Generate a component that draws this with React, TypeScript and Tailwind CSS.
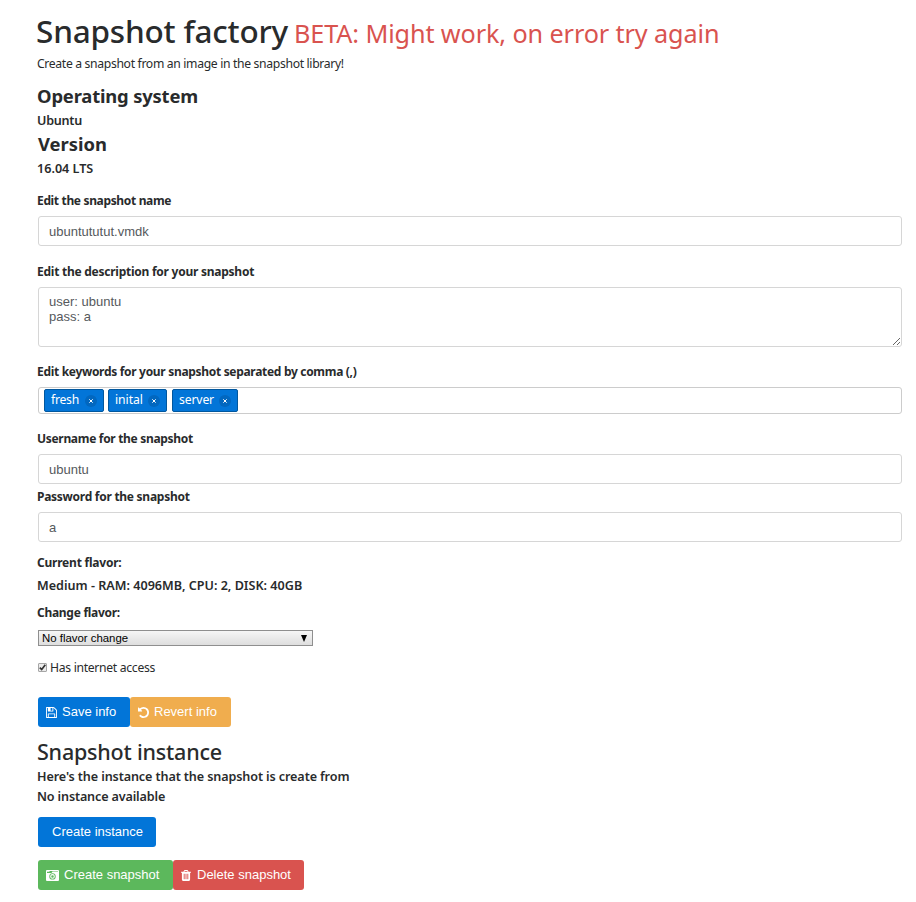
import type { ReactNode } from "react";

const FLOPPY =
  "M384 1536h768v-384h-768v384zM1280 1536h128v-896q0-14-10-38.5t-20-34.5l-281-281q-10-10-34-20t-39-10v416q0 40-28 68t-68 28h-576q-40 0-68-28t-28-68v-416h-128v1280h128v-416q0-40 28-68t68-28h832q40 0 68 28t28 68v416zM896 608v-320q0-13-9.5-22.5t-22.5-9.5h-192q-13 0-22.5 9.5t-9.5 22.5v320q0 13 9.5 22.5t22.5 9.5h192q13 0 22.5-9.5t9.5-22.5zM1536 640v928q0 40-28 68t-68 28h-1344q-40 0-68-28t-28-68v-1344q0-40 28-68t68-28h928q40 0 88 20t76 48l280 280q28 28 48 76t20 88z";
const UNDO =
  "M1664 896q0 156-61 298t-164 245-245 164-298 61q-172 0-327-72.5t-264-204.5q-7-10-6.5-22.5t8.5-20.5l137-138q10-9 25-9 16 2 23 12 73 95 179 147t225 52q104 0 198.5-40.5t163.5-109.5 109.5-163.5 40.5-198.5-40.5-198.5-109.5-163.5-163.5-109.5-198.5-40.5q-98 0-188 35.5t-160 101.5l137 138q31 30 14 69-17 40-59 40h-448q-26 0-45-19t-19-45v-448q0-42 40-59 39-17 69 14l130 129q107-101 244.5-156.5t284.5-55.5q156 0 298 61t245 164 164 245 61 298z";
const TRASH =
  "M704 1376v-704q0-14-9-23t-23-9h-64q-14 0-23 9t-9 23v704q0 14 9 23t23 9h64q14 0 23-9t9-23zm256 0v-704q0-14-9-23t-23-9h-64q-14 0-23 9t-9 23v704q0 14 9 23t23 9h64q14 0 23-9t9-23zm256 0v-704q0-14-9-23t-23-9h-64q-14 0-23 9t-9 23v704q0 14 9 23t23 9h64q14 0 23-9t9-23zm-544-992h448l-48-117q-7-9-17-11h-317q-10 2-17 11zm928 32v64q0 14-9 23t-23 9h-96v948q0 83-47 143.5t-113 60.5h-832q-66 0-113-58.5t-47-141.5v-952h-96q-14 0-23-9t-9-23v-64q0-14 9-23t23-9h309l70-167q15-37 54-63t79-26h320q40 0 79 26t54 63l70 167h309q14 0 23 9t9 23z";

const control =
  "block w-full rounded-[3px] border border-[#d6d6d6] bg-white px-[10px] font-['Liberation_Sans',sans-serif] text-[13px] text-[#55595c] outline-none";

function Label({ className, children }: { className: string; children: ReactNode }) {
  return (
    <label className={`-ml-px block h-5 text-[12px] leading-5 font-bold whitespace-nowrap ${className}`}>{children}</label>
  );
}

function Strong({ className, children }: { className: string; children: ReactNode }) {
  return <p className={`-ml-px h-[14px] leading-[14px] font-semibold whitespace-nowrap ${className}`}>{children}</p>;
}

function Button({ className, children }: { className: string; children: ReactNode }) {
  return (
    <button
      className={`flex h-[30px] items-center rounded-[3px] font-['Liberation_Sans',sans-serif] text-[13px] whitespace-nowrap text-white ${className}`}
    >
      {children}
    </button>
  );
}

function Tag({ className, children }: { className: string; children: ReactNode }) {
  return (
    <span
      className={`flex h-[23px] items-center justify-between rounded-[2px] border border-[#01579e] bg-[#0275d8] pr-[6px] pl-[6px] text-[12.2px] leading-5 text-white ${className}`}
    >
      <span className="-mt-[2px]">{children}</span>
      <span className="mt-px flex size-3 items-center justify-center rounded-full bg-[#0267bf]">
        <svg viewBox="0 0 4 4" className="size-1" stroke="#fff" strokeWidth="1">
          <path d="M0.3 0.3 3.7 3.7M3.7 0.3 0.3 3.7" />
        </svg>
      </span>
    </span>
  );
}

export default function App() {
  return (
    <main className="h-[902px] w-full overflow-hidden bg-white pt-[13px] pr-[14px] pl-[38px] font-['Noto_Sans',sans-serif] text-[12.6px] text-[#292b2c]">
      <h1 className="-ml-[2px] flex h-9 items-baseline text-[31.5px] leading-9 font-medium tracking-[-0.2px] whitespace-nowrap">
        Snapshot factory
        <small className="ml-[6px] text-[25.2px] leading-9 font-normal tracking-[-0.1px] text-[#d9534f]">
          BETA: Might work, on error try again
        </small>
      </h1>
      <p className="-ml-px mt-[5px] h-5 text-[12.2px] leading-5 tracking-[-0.34px] whitespace-nowrap">
        Create a snapshot from an image in the snapshot library!
      </p>

      <h4 className="-ml-px mt-[11px] h-[22px] text-[18.4px] leading-[22px] font-bold tracking-[-0.17px]">Operating system</h4>
      <Strong className="mt-[7px] tracking-[-0.25px]">Ubuntu</Strong>
      <h4 className="mt-[5px] h-[22px] text-[18.4px] leading-[22px] font-bold">Version</h4>
      <Strong className="mt-[7px]">16.04 LTS</Strong>

      <Label className="mt-[15px] tracking-[-0.34px]">Edit the snapshot name</Label>
      <input className={`${control} mt-[5px] h-[30px]`} defaultValue="ubuntututut.vmdk" />

      <Label className="mt-4 tracking-[-0.25px]">Edit the description for your snapshot</Label>
      <textarea
        className={`${control} mt-[5px] h-[60px] resize py-[6px] leading-[15px]`}
        defaultValue={"user: ubuntu\npass: a"}
      />

      <Label className="mt-[15px] tracking-[-0.31px]">Edit keywords for your snapshot separated by comma (,)</Label>
      <div className="mt-[5px] flex h-[27px] gap-1 rounded-[3px] border border-[#ccc] pt-px pl-[5px]">
        <Tag className="w-[60px] tracking-[-0.25px]">fresh</Tag>
        <Tag className="w-[59px] tracking-[-0.05px]">inital</Tag>
        <Tag className="ml-px w-[66px] tracking-[-0.14px]">server</Tag>
      </div>

      <Label className="mt-[15px] tracking-[-0.31px]">Username for the snapshot</Label>
      <input className={`${control} mt-[5px] h-[30px]`} defaultValue="ubuntu" />
      <Label className="mt-[3px] tracking-[-0.27px]">Password for the snapshot</Label>
      <input className={`${control} mt-[5px] h-[30px]`} defaultValue="a" />

      <Label className="mt-[11px] tracking-[-0.22px]">Current flavor:</Label>
      <Strong className="mt-[6px]">Medium - RAM: 4096MB, CPU: 2, DISK: 40GB</Strong>
      <Label className="mt-[10px] tracking-[-0.28px]">Change flavor:</Label>
      <div className="mt-[7px] flex h-4 w-[275px] items-center justify-between border border-[#8f8f8f] bg-linear-to-b from-[#f6f6f6] to-[#dedede] pr-[5px] pl-[3px] font-['Liberation_Sans',sans-serif] text-[11.4px] leading-[14px] text-black">
        No flavor change
        <svg viewBox="0 0 6 7" className="h-[7px] w-[6px]">
          <path d="M0 0h6L3 7z" />
        </svg>
      </div>

      <div className="mt-3 flex h-5 items-center gap-[3px]">
        <span className="-mt-[2px] flex size-[9px] items-center justify-center rounded-[1px] border border-[#a6a6a6] bg-[#ececec]">
          <svg viewBox="0 0 7 7" className="size-[7px]" fill="none" stroke="#333" strokeWidth="1.7">
            <path d="M0.8 3.6 2.7 5.5 6.3 0.8" />
          </svg>
        </span>
        <span className="text-[12.2px] leading-5 tracking-[-0.31px]">Has internet access</span>
      </div>

      <div className="mt-[19px] flex">
        <Button className="w-[92px] gap-[5px] bg-[#0275d8] pl-[8px]">
          <svg viewBox="0 128 1536 1536" className="size-[11px]" fill="currentColor">
            <path d={FLOPPY} />
          </svg>
          Save info
        </Button>
        <Button className="w-[101px] gap-[5px] bg-[#f0ad4e] pl-[8px]">
          <svg viewBox="128 128 1536 1536" className="size-[11px]" fill="currentColor">
            <path d={UNDO} />
          </svg>
          Revert info
        </Button>
      </div>

      <h3 className="-ml-px mt-3 h-[25px] text-[21.5px] leading-[25px] font-medium tracking-[-0.21px]">Snapshot instance</h3>
      <Strong className="mt-[6px] tracking-[-0.11px]">Here's the instance that the snapshot is create from</Strong>
      <Strong className="mt-[6px] tracking-[-0.15px]">No instance available</Strong>
      <Button className="mt-[13px] w-[118px] bg-[#0275d8] pl-[14px]">Create instance</Button>

      <div className="mt-[13px] flex">
        <Button className="w-[135px] gap-[5px] bg-[#5cb85c] pl-[8px]">
          <svg viewBox="0 0 13 11" className="h-[11px] w-[13px]" fill="none">
            <path fill="currentColor" fillRule="evenodd" d="M1 0h11q1 0 1 1v9q0 1-1 1H1q-1 0-1-1V1q0-1 1-1zM1 3h4.5l1-1.4H12V1H3.5v.8H1zM6.5 3.2a3.2 3.2 0 1 0 0 6.4 3.2 3.2 0 0 0 0-6.4z" />
            <circle cx="6.5" cy="6.4" r="1.8" stroke="currentColor" strokeWidth="1.1" />
          </svg>
          Create snapshot
        </Button>
        <Button className="w-[131px] gap-[6px] bg-[#d9534f] pl-[8px]">
          <svg viewBox="192 128 1408 1536" className="h-[11px] w-[10px]" fill="currentColor">
            <path d={TRASH} />
          </svg>
          Delete snapshot
        </Button>
      </div>
    </main>
  );
}
